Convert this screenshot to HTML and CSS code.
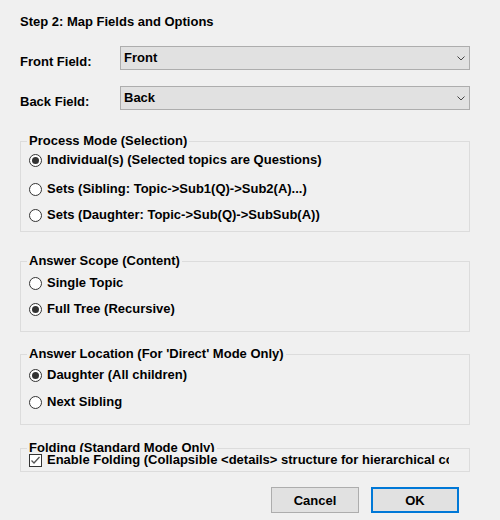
FILE: index.html
```html
<!DOCTYPE html>
<html>
<head>
<meta charset="utf-8">
<link rel="stylesheet" href="styles.css">
</head>
<body>
<div class="dialog">
  <h1 class="title">Step 2: Map Fields and Options</h1>

  <div class="field-row front">
    <label class="field-label">Front Field:</label>
    <div class="combo"><span>Front</span><svg class="chev" width="8" height="5" viewBox="0 0 8 5"><polyline points="0.5,0.5 4,4 7.5,0.5" fill="none" stroke="#444" stroke-width="1"/></svg></div>
  </div>
  <div class="field-row back">
    <label class="field-label">Back Field:</label>
    <div class="combo"><span>Back</span><svg class="chev" width="8" height="5" viewBox="0 0 8 5"><polyline points="0.5,0.5 4,4 7.5,0.5" fill="none" stroke="#444" stroke-width="1"/></svg></div>
  </div>

  <fieldset class="group process">
    <legend>Process Mode (Selection)</legend>
    <div class="opt p1"><svg class="radio" width="13" height="13" viewBox="0 0 13 13"><circle cx="6.5" cy="6.5" r="6" fill="#fff" stroke="#333"/><circle cx="6.5" cy="6.5" r="3.5" fill="#333"/></svg><span>Individual(s) (Selected topics are Questions)</span></div>
    <div class="opt p2"><svg class="radio" width="13" height="13" viewBox="0 0 13 13"><circle cx="6.5" cy="6.5" r="6" fill="#fff" stroke="#333"/></svg><span>Sets (Sibling: Topic-&gt;Sub1(Q)-&gt;Sub2(A)...)</span></div>
    <div class="opt"><svg class="radio" width="13" height="13" viewBox="0 0 13 13"><circle cx="6.5" cy="6.5" r="6" fill="#fff" stroke="#333"/></svg><span>Sets (Daughter: Topic-&gt;Sub(Q)-&gt;SubSub(A))</span></div>
  </fieldset>

  <fieldset class="group scope">
    <legend>Answer Scope (Content)</legend>
    <div class="opt"><svg class="radio" width="13" height="13" viewBox="0 0 13 13"><circle cx="6.5" cy="6.5" r="6" fill="#fff" stroke="#333"/></svg><span>Single Topic</span></div>
    <div class="opt"><svg class="radio" width="13" height="13" viewBox="0 0 13 13"><circle cx="6.5" cy="6.5" r="6" fill="#fff" stroke="#333"/><circle cx="6.5" cy="6.5" r="3.5" fill="#333"/></svg><span>Full Tree (Recursive)</span></div>
  </fieldset>

  <fieldset class="group location">
    <legend>Answer Location (For 'Direct' Mode Only)</legend>
    <div class="opt"><svg class="radio" width="13" height="13" viewBox="0 0 13 13"><circle cx="6.5" cy="6.5" r="6" fill="#fff" stroke="#333"/><circle cx="6.5" cy="6.5" r="3.5" fill="#333"/></svg><span>Daughter (All children)</span></div>
    <div class="opt l2"><svg class="radio" width="13" height="13" viewBox="0 0 13 13"><circle cx="6.5" cy="6.5" r="6" fill="#fff" stroke="#333"/></svg><span>Next Sibling</span></div>
  </fieldset>

  <fieldset class="group folding">
    <legend>Folding (Standard Mode Only)</legend>
    <div class="check-row"><svg class="check" width="13" height="13" viewBox="0 0 13 13"><rect x="0.5" y="0.5" width="12" height="12" fill="#fff" stroke="#333"/><polyline points="2.5,6.5 5,9 10.5,3" fill="none" stroke="#555" stroke-width="1.3"/></svg><span>Enable Folding (Collapsible &lt;details&gt; structure for hierarchical content)</span></div>
  </fieldset>

  <div class="buttons">
    <button class="btn">Cancel</button>
    <button class="btn default">OK</button>
  </div>
</div>
</body>
</html>
```

FILE: styles.css
```css
html, body {
  margin: 0;
  background: #f0f0f0;
}

body {
  font: 700 13px "Liberation Sans", Arial, sans-serif;
  color: #000;
}

.dialog {
  width: 500px;
  box-sizing: border-box;
  padding: 14px 30px 0 20px;
}

.title {
  margin: 0;
  font-size: 13px;
  line-height: 16px;
  height: 16px;
  font-weight: 700;
}

.field-row {
  display: flex;
  height: 24px;
  margin-top: 16px;
}

.field-row.back {
  margin-top: 16px;
}

.field-label {
  width: 100px;
  padding-top: 8px;
  line-height: 16px;
}

.combo {
  flex: 1;
  box-sizing: border-box;
  height: 24px;
  border: 1px solid #adadad;
  background: #e1e1e1;
  display: flex;
  align-items: center;
  justify-content: space-between;
  padding: 0 4px 0 3px;
  line-height: 16px;
}

.chev {
  display: block;
}

.group {
  margin: 0;
  padding: 0 0 0 8px;
  border: 1px solid #dcdcdc;
  min-width: 0;
}

.group legend {
  padding: 0 2px;
  margin-left: -2px;
  line-height: 12px;
}

.opt {
  display: flex;
  align-items: center;
  gap: 5px;
  height: 26px;
  line-height: 16px;
  white-space: nowrap;
}

.radio, .check {
  display: block;
  flex: none;
}

.process {
  margin-top: 25px;
  padding-bottom: 3px;
}

.process .p1 {
  margin-bottom: 3px;
}

.scope {
  margin-top: 23px;
  padding-top: 3px;
  padding-bottom: 9px;
}

.location {
  margin-top: 16px;
  padding-top: 2px;
  padding-bottom: 9px;
}

.location .l2 {
  margin-top: 1px;
}

.folding {
  margin-top: 17px;
  padding-bottom: 3px;
}

.check-row {
  position: relative;
  margin-top: -2px;
  width: 420px;
  height: 16px;
  line-height: 16px;
  display: flex;
  align-items: center;
  gap: 5px;
  white-space: nowrap;
  overflow: hidden;
  background: #f0f0f0;
}

.buttons {
  display: flex;
  justify-content: flex-end;
  gap: 12px;
  margin: 15px 11px 0 0;
}

.btn {
  width: 88px;
  height: 26px;
  box-sizing: border-box;
  border: 1px solid #adadad;
  background: #e1e1e1;
  font: 700 13px "Liberation Sans", Arial, sans-serif;
  color: #000;
  padding: 0;
}

.btn.default {
  border: 2px solid #0078d7;
}
```
